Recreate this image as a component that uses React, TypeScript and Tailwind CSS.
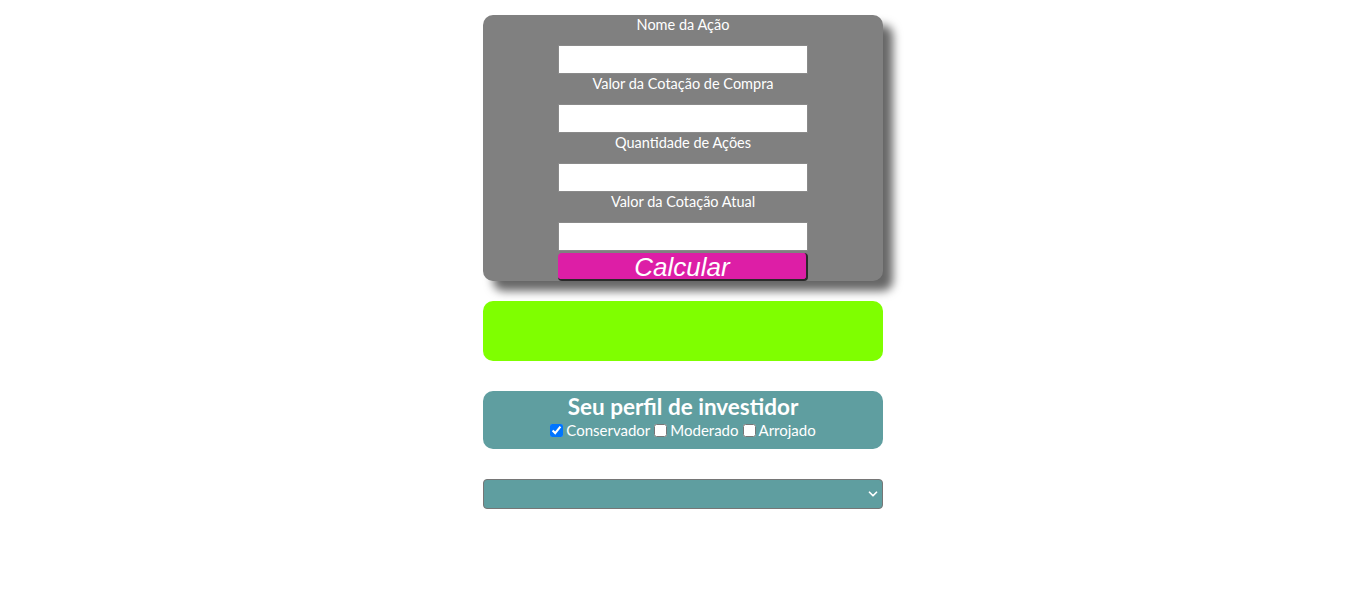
import { ChevronDown } from "lucide-react";

const fields = [
  "Nome da Ação",
  "Valor da Cotação de Compra",
  "Quantidade de Ações",
  "Valor da Cotação Atual",
];

export default function App() {
  return (
    <div className="flex min-h-[613px] w-full flex-col items-center bg-white pt-[15px] font-['Lato',sans-serif] text-white">
      {/* Form card */}
      <div className="flex w-[400px] flex-col items-center rounded-[10px] bg-[#808080] shadow-[10px_10px_10px_rgba(0,0,0,0.6)]">
        {fields.map((label) => (
          <div key={label} className="flex flex-col items-center">
            <label className="mb-[10px] h-5 text-[14.5px] leading-5">{label}</label>
            <input
              type="text"
              className="h-[29px] w-[250px] border border-[#8a8a8a] bg-white px-1 text-black outline-none"
            />
          </div>
        ))}
        <button className="mt-[2px] h-[28px] w-[250px] rounded-[4px] border-b-2 border-r-2 border-[#2a2a2a] bg-[#dd1ea6] font-['Liberation_Sans',sans-serif] text-[26px] leading-[28px] italic text-white">
          Calcular
        </button>
      </div>

      {/* Result box */}
      <div className="mt-5 h-[60px] w-[400px] rounded-[10px] bg-[#7fff00]" />

      {/* Profile */}
      <div className="mt-[30px] flex h-[58px] w-[400px] flex-col items-center rounded-[10px] bg-[#5f9ea0] pt-[2px]">
        <h2 className="text-[22.5px] font-bold leading-7">Seu perfil de investidor</h2>
        <div className="-mt-[1px] flex items-center text-[15px] leading-5">
          <label className="flex items-center">
            <input type="checkbox" defaultChecked className="m-0 mr-[3px] h-[13px] w-[13px] accent-[#0075ff]" />
            Conservador
          </label>
          <label className="ml-[4px] flex items-center">
            <input type="checkbox" className="m-0 mr-[3px] h-[13px] w-[13px]" />
            Moderado
          </label>
          <label className="ml-[4px] flex items-center">
            <input type="checkbox" className="m-0 mr-[3px] h-[13px] w-[13px]" />
            Arrojado
          </label>
        </div>
      </div>

      {/* Select */}
      <div className="relative mt-[30px] w-[400px]">
        <select className="h-[30px] w-full appearance-none rounded-[4px] border border-[#767676] bg-[#5f9ea0] px-2 text-white outline-none">
          <option></option>
        </select>
        <ChevronDown className="pointer-events-none absolute right-[3px] top-[8px] h-[14px] w-[14px] text-white" strokeWidth={3} />
      </div>
    </div>
  );
}
